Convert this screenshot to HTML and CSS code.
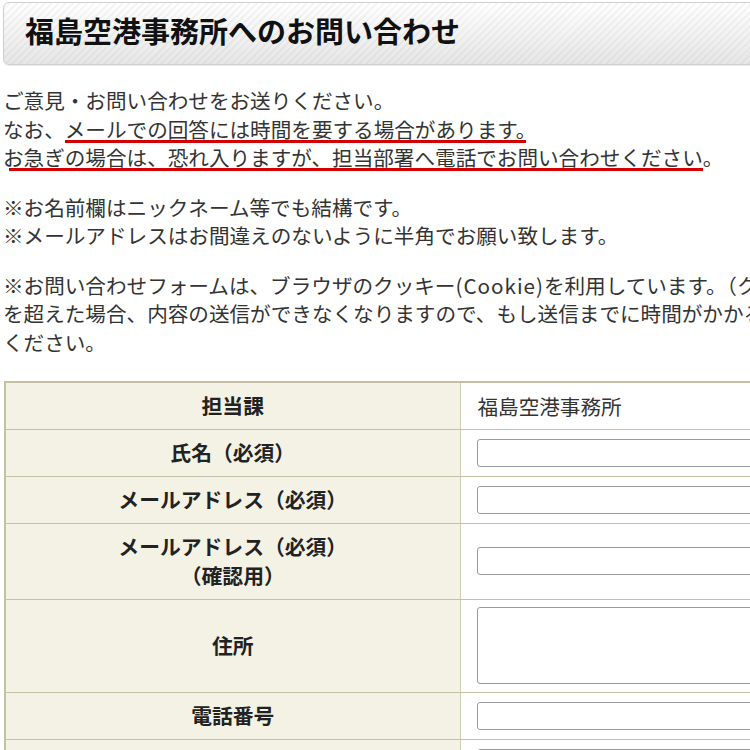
FILE: index.html
```html
<!DOCTYPE html>
<html lang="ja">
<head>
<meta charset="utf-8">
<title>福島空港事務所へのお問い合わせ</title>
<link rel="stylesheet" href="styles.css">
</head>
<body>
<div class="page">
  <h1 class="title">福島空港事務所へのお問い合わせ</h1>

  <p class="text">ご意見・お問い合わせをお送りください。<br>なお、<span class="mark mark-a">メールでの回答には時間を要する場合があります。</span><br><span class="mark mark-b">お急ぎの場合は、恐れ入りますが、担当部署へ電話でお問い合わせください</span>。</p>

  <p class="text">※お名前欄はニックネーム等でも結構です。<br>※メールアドレスはお間違えのないように半角でお願い致します。</p>

  <p class="text">※お問い合わせフォームは、ブラウザのクッキー<span class="latin">(Cookie)</span>を利用しています。（クッキーの有効期限は60分です。）有効期限<br>を超えた場合、内容の送信ができなくなりますので、もし送信までに時間がかかる場合は、一度お手元に内容を保存してから送信して<br>ください。</p>

  <table class="form">
    <tr>
      <th class="label">担当課</th>
      <td class="field"><span class="value">福島空港事務所</span></td>
    </tr>
    <tr>
      <th class="label">氏名（必須）</th>
      <td class="field"><input class="input" type="text"></td>
    </tr>
    <tr>
      <th class="label">メールアドレス（必須）</th>
      <td class="field"><input class="input" type="text"></td>
    </tr>
    <tr>
      <th class="label">メールアドレス（必須）<br>（確認用）</th>
      <td class="field"><input class="input" type="text"></td>
    </tr>
    <tr>
      <th class="label">住所</th>
      <td class="field"><textarea class="area"></textarea></td>
    </tr>
    <tr>
      <th class="label">電話番号</th>
      <td class="field"><input class="input" type="text"></td>
    </tr>
    <tr>
      <th class="label">ＦＡＸ番号</th>
      <td class="field"><input class="input" type="text"></td>
    </tr>
  </table>
</div>
</body>
</html>
```

FILE: styles.css
```css
html, body {
  margin: 0;
  padding: 0;
  background: #ffffff;
  overflow: hidden;
}

body {
  font-family: "Noto Sans CJK JP", "Noto Sans", sans-serif;
  color: #333333;
}

.page {
  width: 1100px;
  padding: 2px 0 0 3px;
}

.title {
  margin: 0;
  height: 55px;
  padding: 6px 0 0 21px;
  font-size: 29px;
  font-weight: 700;
  line-height: 42px;
  color: #111111;
  border: 1px solid #cfcfcf;
  border-radius: 6px;
  background:
    repeating-linear-gradient(135deg, rgba(255,255,255,0) 0 3px, rgba(0,0,0,0.035) 3px 5px),
    linear-gradient(#ffffff 0%, #f4f4f4 45%, #e6e6e6 100%);
  box-shadow: 0 1px 1px rgba(0,0,0,0.08);
}

.text {
  margin: 21px 0 0 0;
  font-size: 20.6px;
  line-height: 28.5px;
  white-space: nowrap;
}

.latin {
  letter-spacing: 1px;
}

.mark {
  background-image: linear-gradient(#d40000, #d40000);
  background-repeat: no-repeat;
}

.mark-a {
  background-size: calc(100% - 10px) 3px;
  background-position: 0 calc(100% - 1px);
}

.mark-b {
  background-size: calc(100% - 6px) 3px;
  background-position: 6px calc(100% - 1px);
}

.form {
  margin-top: 25px;
  margin-left: 1px;
  width: 1000px;
  border-collapse: collapse;
  border-top: 2px solid #c4c1a0;
  border-left: 2px solid #c4c1a0;
}

.label {
  width: 455px;
  box-sizing: border-box;
  padding: 8px 8px 9px;
  background: #f4f2e5;
  border-right: 1px solid #cfcdb0;
  border-bottom: 1px solid #c4c2a5;
  font-size: 20.8px;
  font-weight: 700;
  line-height: 29px;
  color: #222222;
  text-align: center;
  vertical-align: middle;
}

.field {
  padding: 8px 16px 9px;
  border-bottom: 1px solid #c4c2a5;
  vertical-align: middle;
  background: #ffffff;
}

.value {
  display: block;
  font-size: 20.6px;
  line-height: 28px;
  color: #333333;
  padding-left: 1px;
}

.input {
  display: block;
  box-sizing: border-box;
  width: 480px;
  height: 28px;
  margin: 0;
  border: 1px solid #9a9a9a;
  border-radius: 3px;
  background: #ffffff;
}

.area {
  display: block;
  box-sizing: border-box;
  width: 480px;
  height: 77px;
  margin: -1px 0;
  border: 1px solid #9a9a9a;
  border-radius: 3px;
  background: #ffffff;
  resize: none;
}
```
